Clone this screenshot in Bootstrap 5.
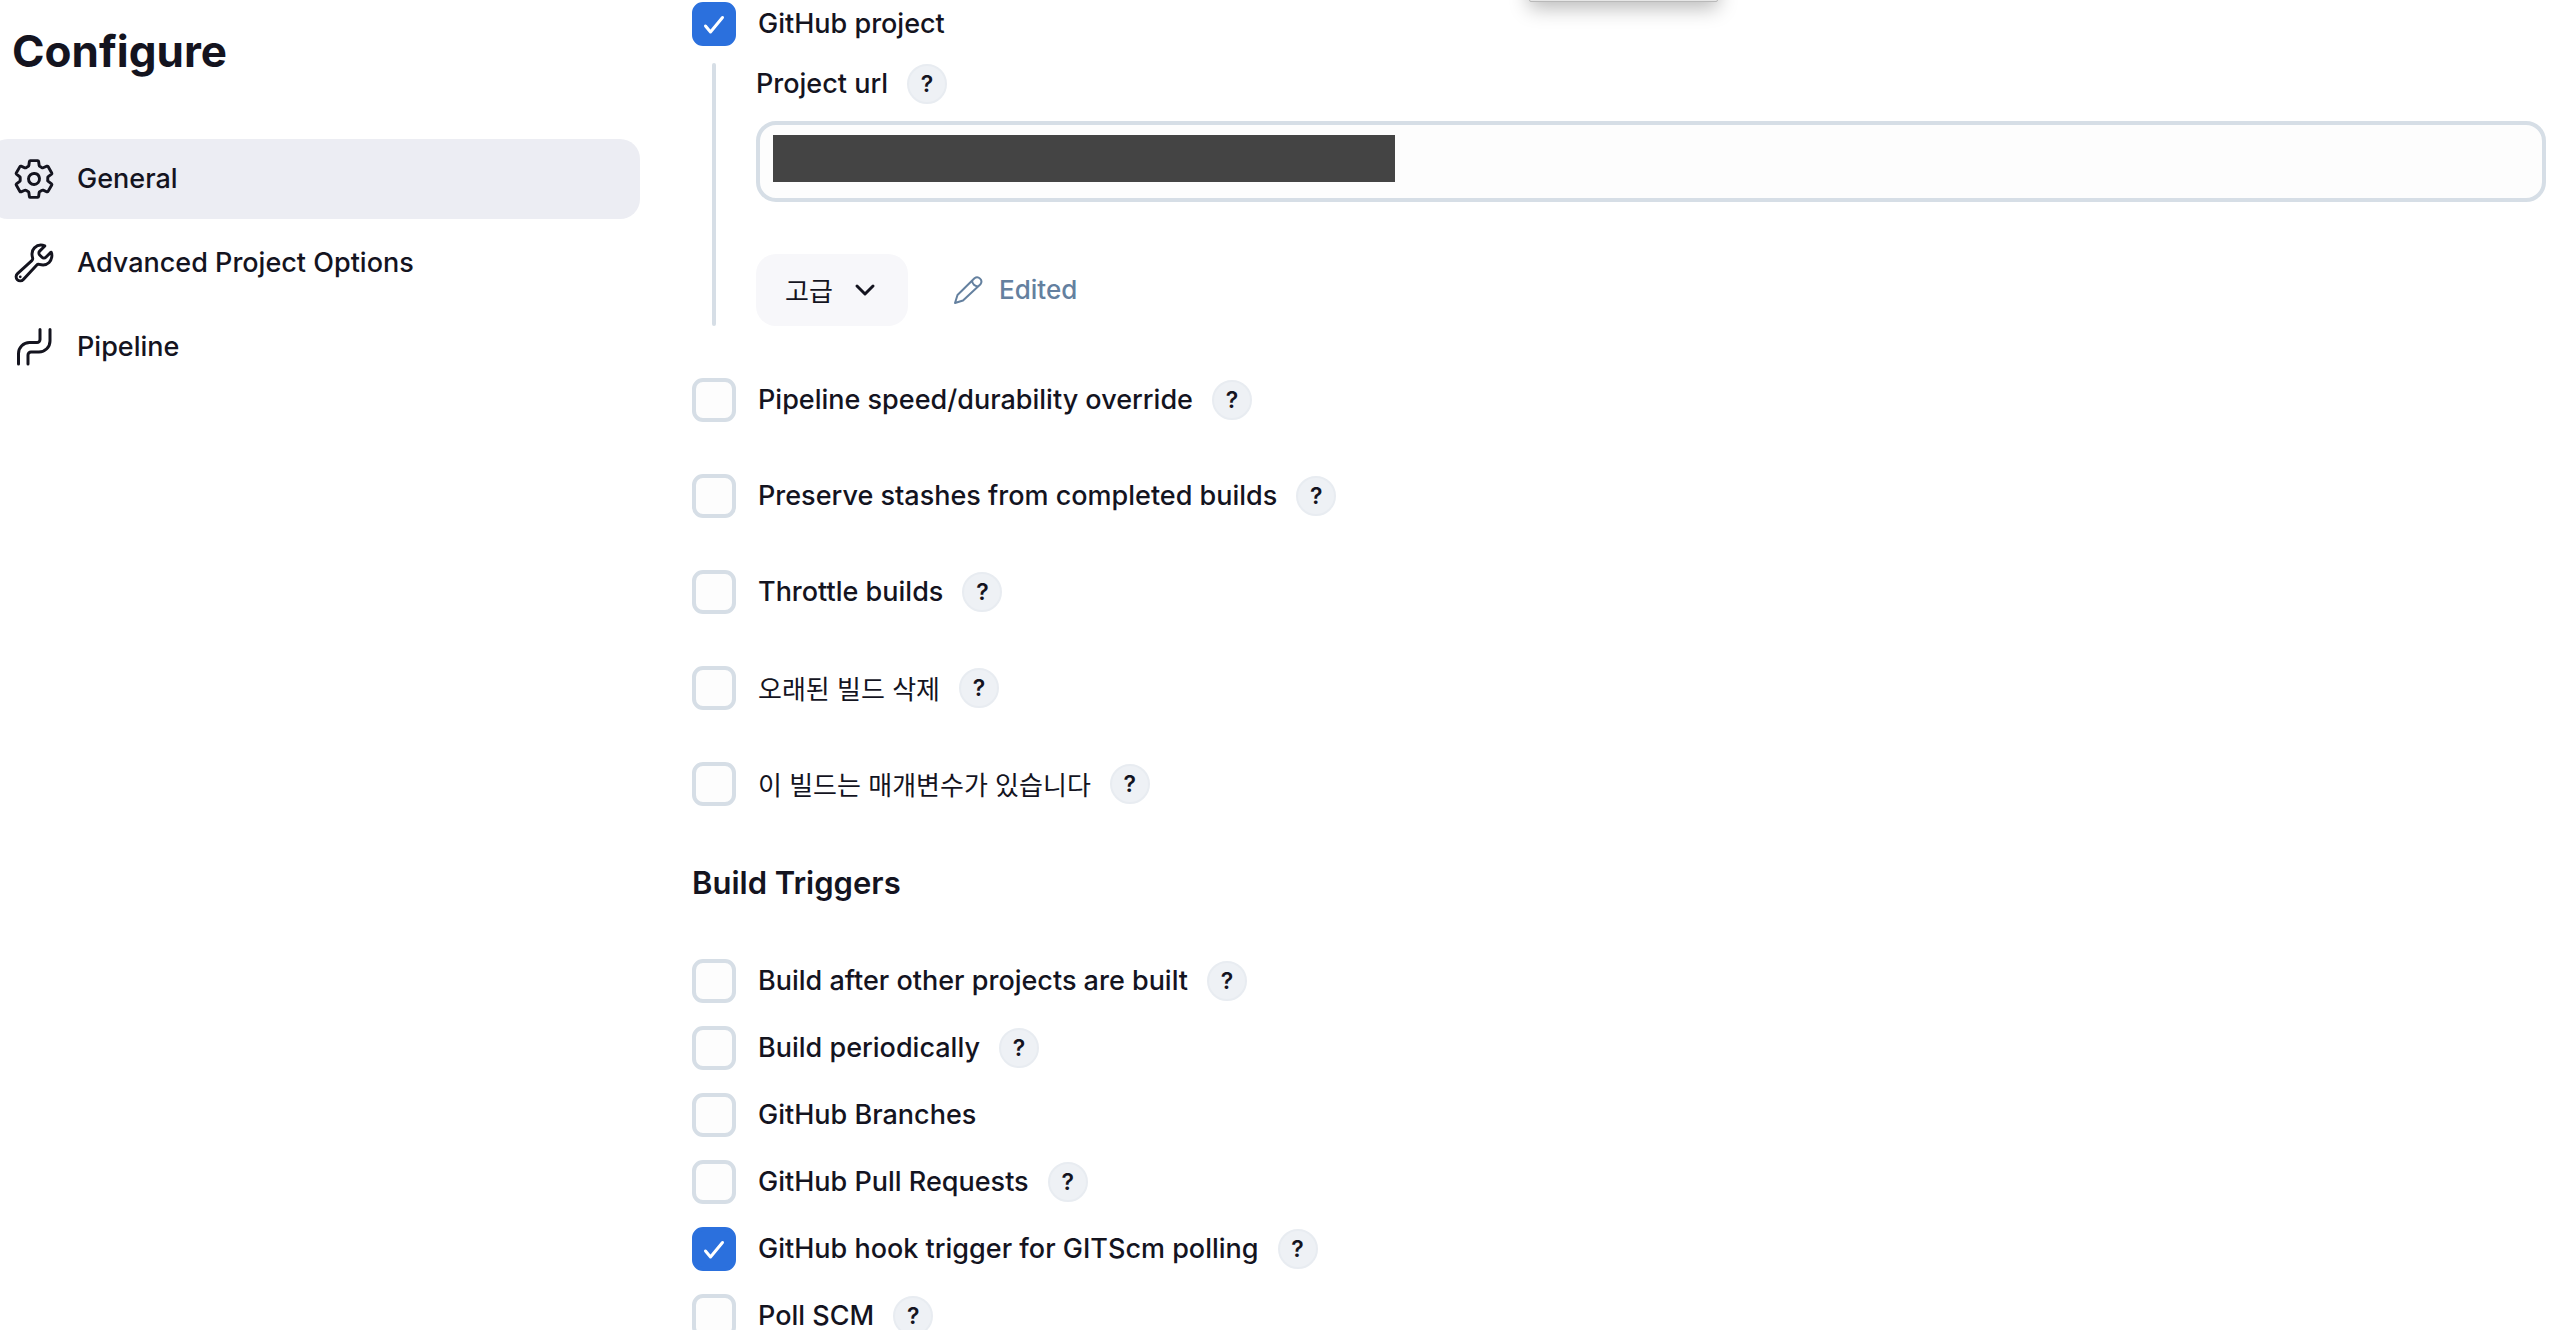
<!DOCTYPE html>
<html lang="en">
<head>
<meta charset="utf-8">
<meta name="viewport" content="width=device-width, initial-scale=1">
<title>Configure</title>
<link href="https://cdn.jsdelivr.net/npm/bootstrap@5.3.0/dist/css/bootstrap.min.css" rel="stylesheet">
<style>
  :root { --ink: #14141f; --line: #d6dee6; --accent: #2b70dd; }
  body { font-family: Inter, "Noto Sans CJK KR", sans-serif; font-size: 27px; line-height: 40px; font-weight: 500; color: var(--ink); background: #fff; height: 100vh; overflow: hidden; }
  [lang=ko] { font-family: "Noto Sans CJK KR", sans-serif; font-size: 26px; font-weight: 400; }
  .side { flex: 0 0 652px; margin-left: -12px; padding-top: 21px; }
  .side h1 { font-size: 44px; line-height: 60px; font-weight: 700; margin: 0 0 58px 24px; }
  .side .nav { gap: 4px; }
  .side .nav-link { display: flex; align-items: center; gap: 21px; height: 80px; padding: 0 24px; border-radius: 20px; color: var(--ink); }
  .side .nav-link.active { background: #ecedf3; }
  .side svg { width: 44px; height: 44px; flex: none; fill: none; stroke: currentColor; stroke-width: 34; stroke-linecap: round; stroke-linejoin: round; }
  .side svg.pipe { stroke-width: 3; }
  .settings { padding: 2px 8px 0 52px; min-width: 0; }
  .opt { display: flex; align-items: center; height: 44px; }
  .opt .form-check-input { width: 44px; height: 44px; margin: 0 22px 0 0; flex: none; border: 4px solid var(--line); border-radius: 11px; background-color: #fdfdfd; }
  .opt .form-check-input:checked { border-color: var(--accent); background-color: var(--accent); background-origin: border-box; background-size: 44px 44px; background-image: url("data:image/svg+xml,%3Csvg xmlns='http://www.w3.org/2000/svg' viewBox='0 0 44 44'%3E%3Cpath d='M13.500 24l5 6L30.500 15.500' fill='none' stroke='white' stroke-width='3' stroke-linecap='round' stroke-linejoin='round'/%3E%3C/svg%3E"); }
  .help { width: 40px; height: 40px; margin-left: 19px; padding: 0; flex: none; border: 2px solid #e8ecf1; border-radius: 50%; background: #eef1f5; color: var(--ink); font-size: 23px; line-height: 36px; font-weight: 600; text-align: center; }
  .nested { margin: 17px 0 52px 20px; padding: 1px 0 0 40px; position: relative; }
  .nested::before { content: ""; position: absolute; left: 0; top: 0; bottom: 0; width: 4px; border-radius: 2px; background: var(--line); }
  .nested .url { position: relative; margin: 17px 0 52px; padding-left: 4px; }
  .url .form-control { height: 81px; border: 4px solid var(--line); border-radius: 20px; background: #fdfdfd; font-size: 27px; }
  .redacted { position: absolute; left: 21px; top: 14px; width: 622px; height: 47px; background: #444; }
  .nested .capt, .nested .acts { padding-left: 4px; }
  .adv { height: 72px; width: 152px; border: 0; border-radius: 20px; background: #f7f7fa; color: var(--ink); padding: 0; gap: 18px; }
  .adv svg { width: 28px; height: 28px; }
  .edited { margin-left: 44px; gap: 15px; font-size: 26px; color: #64809f; }
  .edited svg { width: 32px; height: 32px; }
  .spaced { display: grid; gap: 52px; }
  .tight { display: grid; gap: 23px; }
  .settings h2 { font-size: 31px; line-height: 44px; font-weight: 600; margin: 55px 0 54px; }
  .tip { position: absolute; left: 1529px; top: -40px; width: 189px; height: 42px; border: 1px solid #b9b9b9; border-radius: 2px; background: #e6e6e6; box-shadow: 0 6px 20px rgba(0,0,0,.28); }
</style>
</head>
<body>
<div class="tip"></div>
<div class="d-flex">
  <aside class="side">
    <h1>Configure</h1>
    <nav class="nav flex-column">
      <a class="nav-link active" href="#general"><svg viewBox="0 0 512 512"><path d="M262.29 192.31a64 64 0 1057.4 57.4 64.13 64.13 0 00-57.4-57.4zM416.39 256a154.34 154.34 0 01-1.53 20.79l45.21 35.46a10.81 10.81 0 012.45 13.75l-42.77 74a10.81 10.81 0 01-13.14 4.59l-44.9-18.08a16.11 16.11 0 00-15.17 1.75A164.48 164.48 0 01325 400.8a15.94 15.94 0 00-8.82 12.14l-6.73 47.89a11.08 11.08 0 01-10.68 9.17h-85.54a11.11 11.11 0 01-10.69-8.87l-6.72-47.82a16.07 16.07 0 00-9-12.22 155.3 155.3 0 01-21.46-12.57 16 16 0 00-15.11-1.71l-44.89 18.07a10.81 10.81 0 01-13.14-4.58l-42.77-74a10.8 10.8 0 012.45-13.75l38.21-30a16.05 16.05 0 006-14.08c-.36-4.17-.58-8.33-.58-12.5s.21-8.27.58-12.35a16 16 0 00-6.07-13.94l-38.19-30A10.81 10.81 0 0149.48 186l42.77-74a10.81 10.81 0 0113.14-4.59l44.9 18.08a16.11 16.11 0 0015.17-1.75A164.48 164.48 0 01187 111.2a15.94 15.94 0 008.82-12.14l6.73-47.89A11.08 11.08 0 01213.23 42h85.54a11.11 11.11 0 0110.69 8.87l6.72 47.82a16.07 16.07 0 009 12.22 155.3 155.3 0 0121.46 12.57 16 16 0 0015.11 1.71l44.89-18.07a10.81 10.81 0 0113.14 4.58l42.77 74a10.8 10.8 0 01-2.45 13.75l-38.21 30a16.05 16.05 0 00-6.05 14.08c.33 4.14.55 8.3.55 12.47z"/></svg>General</a>
      <a class="nav-link" href="#advanced"><svg viewBox="0 0 512 512"><path d="M393.87 190a32.1 32.1 0 01-45.25 0l-26.57-26.57a32.09 32.09 0 010-45.26L382.19 58a1 1 0 00-.3-1.64c-38.82-16.64-89.15-8.16-121.11 23.57-30.58 30.35-32.32 76-21.12 115.84a31.93 31.93 0 01-9.06 32.08L64 380a48.17 48.17 0 1068 68l153.86-167a31.93 31.93 0 0131.6-9.13c39.54 10.59 84.54 8.6 114.72-21.19 32.49-32 39.5-88.56 23.75-120.93a1 1 0 00-1.6-.26z"/><circle cx="96" cy="416" r="16" fill="currentColor" stroke="none"/></svg>Advanced Project Options</a>
      <a class="nav-link" href="#pipeline"><svg class="pipe" viewBox="0 0 44 44"><path d="M6.500 39V28.500A11 11 0 0 1 17.500 17.500H25a3 3 0 0 0 3-3V4.500M16 39V30a3 3 0 0 1 3-3H27A11 11 0 0 0 38 16V4.500"/></svg>Pipeline</a>
    </nav>
  </aside>
  <main class="settings flex-grow-1">
    <div class="opt"><input class="form-check-input" type="checkbox" id="c1" checked><label for="c1">GitHub project</label></div>
    <div class="nested">
      <div class="capt d-flex align-items-center"><label for="url">Project url</label><button class="help" type="button">?</button></div>
      <div class="url"><input class="form-control shadow-none" type="text" id="url"><span class="redacted"></span></div>
      <div class="acts d-flex align-items-center">
        <button class="adv d-flex align-items-center justify-content-center" type="button" lang="ko">고급<svg viewBox="0 0 28 28" fill="none" stroke="currentColor" stroke-width="3" stroke-linecap="round" stroke-linejoin="round"><path d="M6 10l8 8 8-8"/></svg></button>
        <span class="edited d-flex align-items-center"><svg viewBox="0 0 32 32" fill="none" stroke="currentColor" stroke-width="2" stroke-linecap="round" stroke-linejoin="round"><path d="M3 29L5.500 21 22.500 4.200a4.300 4.300 0 0 1 6 6L11 26.500zM20 6.700c.5 3 3 5.500 6 5.800"/></svg>Edited</span>
      </div>
    </div>
    <div class="spaced">
      <div class="opt"><input class="form-check-input" type="checkbox" id="c2"><label for="c2">Pipeline speed/durability override</label><button class="help" type="button">?</button></div>
      <div class="opt"><input class="form-check-input" type="checkbox" id="c3"><label for="c3">Preserve stashes from completed builds</label><button class="help" type="button">?</button></div>
      <div class="opt"><input class="form-check-input" type="checkbox" id="c4"><label for="c4">Throttle builds</label><button class="help" type="button">?</button></div>
      <div class="opt"><input class="form-check-input" type="checkbox" id="c5"><label for="c5" lang="ko">오래된 빌드 삭제</label><button class="help" type="button">?</button></div>
      <div class="opt"><input class="form-check-input" type="checkbox" id="c6"><label for="c6" lang="ko">이 빌드는 매개변수가 있습니다</label><button class="help" type="button">?</button></div>
    </div>
    <h2>Build Triggers</h2>
    <div class="tight">
      <div class="opt"><input class="form-check-input" type="checkbox" id="c7"><label for="c7">Build after other projects are built</label><button class="help" type="button">?</button></div>
      <div class="opt"><input class="form-check-input" type="checkbox" id="c8"><label for="c8">Build periodically</label><button class="help" type="button">?</button></div>
      <div class="opt"><input class="form-check-input" type="checkbox" id="c9"><label for="c9">GitHub Branches</label></div>
      <div class="opt"><input class="form-check-input" type="checkbox" id="c10"><label for="c10">GitHub Pull Requests</label><button class="help" type="button">?</button></div>
      <div class="opt"><input class="form-check-input" type="checkbox" id="c11" checked><label for="c11">GitHub hook trigger for GITScm polling</label><button class="help" type="button">?</button></div>
      <div class="opt"><input class="form-check-input" type="checkbox" id="c12"><label for="c12">Poll SCM</label><button class="help" type="button">?</button></div>
    </div>
  </main>
</div>
<script src="https://cdn.jsdelivr.net/npm/bootstrap@5.3.0/dist/js/bootstrap.bundle.min.js"></script>
</body>
</html>
